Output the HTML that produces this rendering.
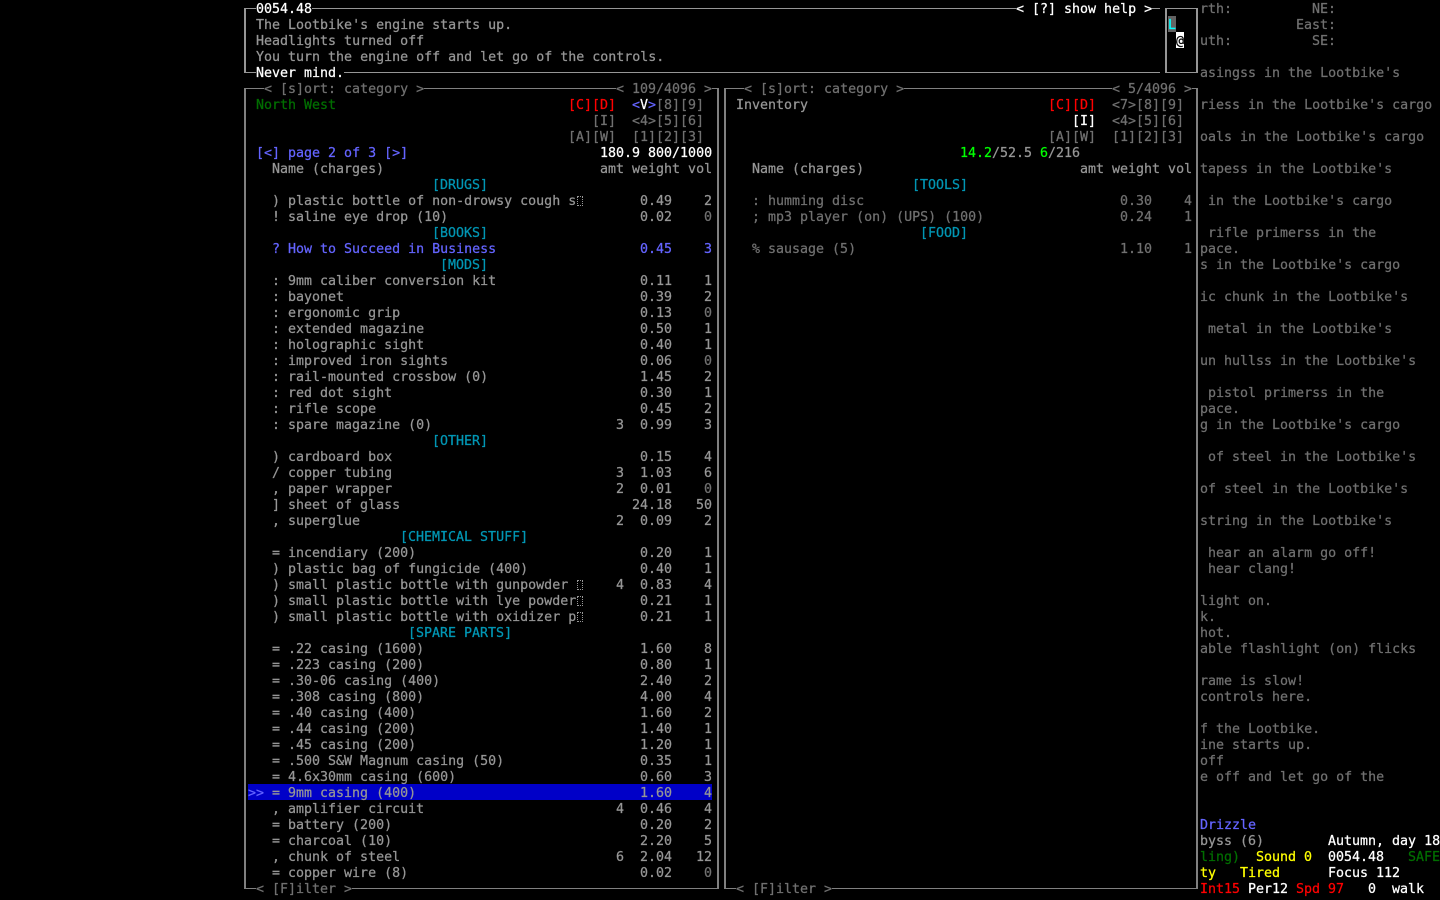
<!DOCTYPE html>
<html><head><meta charset="utf-8"><title>Inventory</title>
<style>
html,body{margin:0;padding:0;background:#000;width:1440px;height:900px;overflow:hidden}
body{position:relative;font:13.3px/16px "DejaVu Sans Mono","Liberation Mono",monospace;color:#969696;-webkit-text-stroke:.25px}
p{position:absolute;left:0;width:1440px;height:16px;margin:0}
a{position:absolute;top:2px;white-space:pre}
i{position:absolute;background:#808080;display:block}
i.m{background:#969696}
i.t{background:none;border:1px dotted #969696;width:4px;height:8px;left:577px}
.w{color:#fff}.d{color:#707070}.c{color:#0096b4}.r{color:#f00}.g{color:#006e00}.l{color:#0f0}.y{color:#ff0}.b{color:#6464ff}
</style></head><body>
<!-- frames -->
<i class="m" style="left:244px;top:8px;width:2px;height:65px"></i>
<i class="m" style="left:244px;top:8px;width:12px;height:1px"></i>
<i class="m" style="left:312px;top:8px;width:704px;height:1px"></i>
<i class="m" style="left:1152px;top:8px;width:8px;height:1px"></i>
<i class="m" style="left:244px;top:72px;width:12px;height:1px"></i>
<i class="m" style="left:344px;top:72px;width:816px;height:1px"></i>
<i class="m" style="left:1165px;top:8px;width:33px;height:1px"></i>
<i class="m" style="left:1165px;top:72px;width:33px;height:1px"></i>
<i class="m" style="left:1165px;top:8px;width:2px;height:65px"></i>
<i class="m" style="left:1196px;top:8px;width:2px;height:65px"></i>
<i style="left:244px;top:88px;width:2px;height:801px"></i>
<i style="left:717px;top:88px;width:2px;height:801px"></i>
<i style="left:724px;top:88px;width:2px;height:801px"></i>
<i style="left:1196px;top:88px;width:2px;height:801px"></i>
<i style="left:245px;top:88px;width:19px;height:1px"></i>
<i style="left:424px;top:88px;width:192px;height:1px"></i>
<i style="left:712px;top:88px;width:7px;height:1px"></i>
<i style="left:725px;top:88px;width:19px;height:1px"></i>
<i style="left:904px;top:88px;width:208px;height:1px"></i>
<i style="left:1192px;top:88px;width:5px;height:1px"></i>
<i style="left:245px;top:888px;width:11px;height:1px"></i>
<i style="left:352px;top:888px;width:367px;height:1px"></i>
<i style="left:725px;top:888px;width:11px;height:1px"></i>
<i style="left:832px;top:888px;width:365px;height:1px"></i>
<!-- selection & minimap -->
<i style="left:248px;top:784px;width:464px;height:16px;background:#0000c8"></i>
<i style="left:1168px;top:16px;width:8px;height:16px;background:#636363"></i>
<i style="left:1176px;top:32px;width:8px;height:16px;background:#fff"></i>
<!-- tofu boxes -->
<i class="t" style="top:196px"></i><i class="t" style="top:580px"></i><i class="t" style="top:596px"></i><i class="t" style="top:612px"></i>
<!-- messages -->
<p style="top:0"><a class="w" style="left:256px">0054.48</a><a class="w" style="left:1016px">&lt; [?] show help &gt;</a><a class="d" style="left:1200px">rth:</a><a class="d" style="left:1312px">NE:</a></p>
<p style="top:16px"><a style="left:256px">The Lootbike's engine starts up.</a><a style="left:1168px;color:#0ff">L</a><a class="d" style="left:1296px">East:</a></p>
<p style="top:32px"><a style="left:256px">Headlights turned off</a><a style="left:1176px;color:#000">@</a><a class="d" style="left:1200px">uth:</a><a class="d" style="left:1312px">SE:</a></p>
<p style="top:48px"><a style="left:256px">You turn the engine off and let go of the controls.</a></p>
<p style="top:64px"><a class="w" style="left:256px">Never mind.</a><a class="d" style="left:1200px">asingss in the Lootbike's</a></p>
<!-- panel headers -->
<p style="top:80px"><a class="d" style="left:264px">&lt; [s]ort: category &gt;</a><a class="d" style="left:616px">&lt; 109/4096 &gt;</a><a class="d" style="left:744px">&lt; [s]ort: category &gt;</a><a class="d" style="left:1112px">&lt; 5/4096 &gt;</a></p>
<p style="top:96px"><a class="g" style="left:256px">North West</a><a class="r" style="left:568px">[C][D]</a><a class="b" style="left:632px">&lt;<span class="w">V</span>&gt;</a><a class="d" style="left:656px">[8][9]</a><a style="left:736px">Inventory</a><a class="r" style="left:1048px">[C][D]</a><a class="d" style="left:1112px">&lt;7&gt;[8][9]</a><a class="d" style="left:1200px">riess in the Lootbike's cargo</a></p>
<p style="top:112px"><a class="d" style="left:592px">[I]</a><a class="d" style="left:632px">&lt;4&gt;[5][6]</a><a class="w" style="left:1072px">[I]</a><a class="d" style="left:1112px">&lt;4&gt;[5][6]</a></p>
<p style="top:128px"><a class="d" style="left:568px">[A][W]</a><a class="d" style="left:632px">[1][2][3]</a><a class="d" style="left:1048px">[A][W]</a><a class="d" style="left:1112px">[1][2][3]</a><a class="d" style="left:1200px">oals in the Lootbike's cargo</a></p>
<p style="top:144px"><a class="b" style="left:256px">[&lt;] page 2 of 3 [&gt;]</a><a class="w" style="left:600px">180.9 800/1000</a><a class="l" style="left:960px">14.2</a><a style="left:992px">/52.5</a><a class="l" style="left:1040px">6</a><a style="left:1048px">/216</a></p>
<p style="top:160px"><a style="left:272px">Name (charges)</a><a style="left:600px">amt weight vol</a><a style="left:752px">Name (charges)</a><a style="left:1080px">amt weight vol</a><a class="d" style="left:1200px">tapess in the Lootbike's</a></p>
<p style="top:176px"><a class="c" style="left:432px">[DRUGS]</a><a class="c" style="left:912px">[TOOLS]</a></p>
<p style="top:192px"><a style="left:272px">) plastic bottle of non-drowsy cough s</a><a style="left:640px">0.49</a><a style="left:704px">2</a><a class="d" style="left:752px">: humming disc</a><a class="d" style="left:1120px">0.30</a><a class="d" style="left:1184px">4</a><a class="d" style="left:1208px">in the Lootbike's cargo</a></p>
<p style="top:208px"><a style="left:272px">! saline eye drop (10)</a><a style="left:640px">0.02</a><a class="d" style="left:704px">0</a><a class="d" style="left:752px">; mp3 player (on) (UPS) (100)</a><a class="d" style="left:1120px">0.24</a><a class="d" style="left:1184px">1</a></p>
<p style="top:224px"><a class="c" style="left:432px">[BOOKS]</a><a class="c" style="left:920px">[FOOD]</a><a class="d" style="left:1208px">rifle primerss in the</a></p>
<p style="top:240px"><a class="b" style="left:272px">? How to Succeed in Business</a><a class="b" style="left:640px">0.45</a><a class="b" style="left:704px">3</a><a class="d" style="left:752px">% sausage (5)</a><a class="d" style="left:1120px">1.10</a><a class="d" style="left:1184px">1</a><a class="d" style="left:1200px">pace.</a></p>
<p style="top:256px"><a class="c" style="left:440px">[MODS]</a><a class="d" style="left:1200px">s in the Lootbike's cargo</a></p>
<p style="top:272px"><a style="left:272px">: 9mm caliber conversion kit</a><a style="left:640px">0.11</a><a style="left:704px">1</a></p>
<p style="top:288px"><a style="left:272px">: bayonet</a><a style="left:640px">0.39</a><a style="left:704px">2</a><a class="d" style="left:1200px">ic chunk in the Lootbike's</a></p>
<p style="top:304px"><a style="left:272px">: ergonomic grip</a><a style="left:640px">0.13</a><a class="d" style="left:704px">0</a></p>
<p style="top:320px"><a style="left:272px">: extended magazine</a><a style="left:640px">0.50</a><a style="left:704px">1</a><a class="d" style="left:1208px">metal in the Lootbike's</a></p>
<p style="top:336px"><a style="left:272px">: holographic sight</a><a style="left:640px">0.40</a><a style="left:704px">1</a></p>
<p style="top:352px"><a style="left:272px">: improved iron sights</a><a style="left:640px">0.06</a><a class="d" style="left:704px">0</a><a class="d" style="left:1200px">un hullss in the Lootbike's</a></p>
<p style="top:368px"><a style="left:272px">: rail-mounted crossbow (0)</a><a style="left:640px">1.45</a><a style="left:704px">2</a></p>
<p style="top:384px"><a style="left:272px">: red dot sight</a><a style="left:640px">0.30</a><a style="left:704px">1</a><a class="d" style="left:1208px">pistol primerss in the</a></p>
<p style="top:400px"><a style="left:272px">: rifle scope</a><a style="left:640px">0.45</a><a style="left:704px">2</a><a class="d" style="left:1200px">pace.</a></p>
<p style="top:416px"><a style="left:272px">: spare magazine (0)</a><a style="left:616px">3</a><a style="left:640px">0.99</a><a style="left:704px">3</a><a class="d" style="left:1200px">g in the Lootbike's cargo</a></p>
<p style="top:432px"><a class="c" style="left:432px">[OTHER]</a></p>
<p style="top:448px"><a style="left:272px">) cardboard box</a><a style="left:640px">0.15</a><a style="left:704px">4</a><a class="d" style="left:1208px">of steel in the Lootbike's</a></p>
<p style="top:464px"><a style="left:272px">/ copper tubing</a><a style="left:616px">3</a><a style="left:640px">1.03</a><a style="left:704px">6</a></p>
<p style="top:480px"><a style="left:272px">, paper wrapper</a><a style="left:616px">2</a><a style="left:640px">0.01</a><a class="d" style="left:704px">0</a><a class="d" style="left:1200px">of steel in the Lootbike's</a></p>
<p style="top:496px"><a style="left:272px">] sheet of glass</a><a style="left:632px">24.18</a><a style="left:696px">50</a></p>
<p style="top:512px"><a style="left:272px">, superglue</a><a style="left:616px">2</a><a style="left:640px">0.09</a><a style="left:704px">2</a><a class="d" style="left:1200px">string in the Lootbike's</a></p>
<p style="top:528px"><a class="c" style="left:400px">[CHEMICAL STUFF]</a></p>
<p style="top:544px"><a style="left:272px">= incendiary (200)</a><a style="left:640px">0.20</a><a style="left:704px">1</a><a class="d" style="left:1208px">hear an alarm go off!</a></p>
<p style="top:560px"><a style="left:272px">) plastic bag of fungicide (400)</a><a style="left:640px">0.40</a><a style="left:704px">1</a><a class="d" style="left:1208px">hear clang!</a></p>
<p style="top:576px"><a style="left:272px">) small plastic bottle with gunpowder</a><a style="left:616px">4</a><a style="left:640px">0.83</a><a style="left:704px">4</a></p>
<p style="top:592px"><a style="left:272px">) small plastic bottle with lye powder</a><a style="left:640px">0.21</a><a style="left:704px">1</a><a class="d" style="left:1200px">light on.</a></p>
<p style="top:608px"><a style="left:272px">) small plastic bottle with oxidizer p</a><a style="left:640px">0.21</a><a style="left:704px">1</a><a class="d" style="left:1200px">k.</a></p>
<p style="top:624px"><a class="c" style="left:408px">[SPARE PARTS]</a><a class="d" style="left:1200px">hot.</a></p>
<p style="top:640px"><a style="left:272px">= .22 casing (1600)</a><a style="left:640px">1.60</a><a style="left:704px">8</a><a class="d" style="left:1200px">able flashlight (on) flicks</a></p>
<p style="top:656px"><a style="left:272px">= .223 casing (200)</a><a style="left:640px">0.80</a><a style="left:704px">1</a></p>
<p style="top:672px"><a style="left:272px">= .30-06 casing (400)</a><a style="left:640px">2.40</a><a style="left:704px">2</a><a class="d" style="left:1200px">rame is slow!</a></p>
<p style="top:688px"><a style="left:272px">= .308 casing (800)</a><a style="left:640px">4.00</a><a style="left:704px">4</a><a class="d" style="left:1200px">controls here.</a></p>
<p style="top:704px"><a style="left:272px">= .40 casing (400)</a><a style="left:640px">1.60</a><a style="left:704px">2</a></p>
<p style="top:720px"><a style="left:272px">= .44 casing (200)</a><a style="left:640px">1.40</a><a style="left:704px">1</a><a class="d" style="left:1200px">f the Lootbike.</a></p>
<p style="top:736px"><a style="left:272px">= .45 casing (200)</a><a style="left:640px">1.20</a><a style="left:704px">1</a><a class="d" style="left:1200px">ine starts up.</a></p>
<p style="top:752px"><a style="left:272px">= .500 S&amp;W Magnum casing (50)</a><a style="left:640px">0.35</a><a style="left:704px">1</a><a class="d" style="left:1200px">off</a></p>
<p style="top:768px"><a style="left:272px">= 4.6x30mm casing (600)</a><a style="left:640px">0.60</a><a style="left:704px">3</a><a class="d" style="left:1200px">e off and let go of the</a></p>
<p style="top:784px"><a class="b" style="left:248px">&gt;&gt;</a><a style="left:272px">= 9mm casing (400)</a><a style="left:640px">1.60</a><a style="left:704px">4</a></p>
<p style="top:800px"><a style="left:272px">, amplifier circuit</a><a style="left:616px">4</a><a style="left:640px">0.46</a><a style="left:704px">4</a></p>
<p style="top:816px"><a style="left:272px">= battery (200)</a><a style="left:640px">0.20</a><a style="left:704px">2</a><a class="b" style="left:1200px">Drizzle</a></p>
<p style="top:832px"><a style="left:272px">= charcoal (10)</a><a style="left:640px">2.20</a><a style="left:704px">5</a><a style="left:1200px">byss (6)</a><a class="w" style="left:1328px">Autumn, day 18</a></p>
<p style="top:848px"><a style="left:272px">, chunk of steel</a><a style="left:616px">6</a><a style="left:640px">2.04</a><a style="left:696px">12</a><a class="g" style="left:1200px">ling)</a><a class="y" style="left:1256px">Sound 0</a><a class="w" style="left:1328px">0054.48</a><a class="g" style="left:1408px">SAFE</a></p>
<p style="top:864px"><a style="left:272px">= copper wire (8)</a><a style="left:640px">0.02</a><a class="d" style="left:704px">0</a><a class="y" style="left:1200px">ty</a><a class="y" style="left:1240px">Tired</a><a class="w" style="left:1328px">Focus 112</a></p>
<p style="top:880px"><a class="d" style="left:256px">&lt; [F]ilter &gt;</a><a class="d" style="left:736px">&lt; [F]ilter &gt;</a><a class="r" style="left:1200px">Int15</a><a class="w" style="left:1248px">Per12</a><a class="r" style="left:1296px">Spd 97</a><a class="w" style="left:1368px">0</a><a class="w" style="left:1392px">walk</a></p>
</body></html>
